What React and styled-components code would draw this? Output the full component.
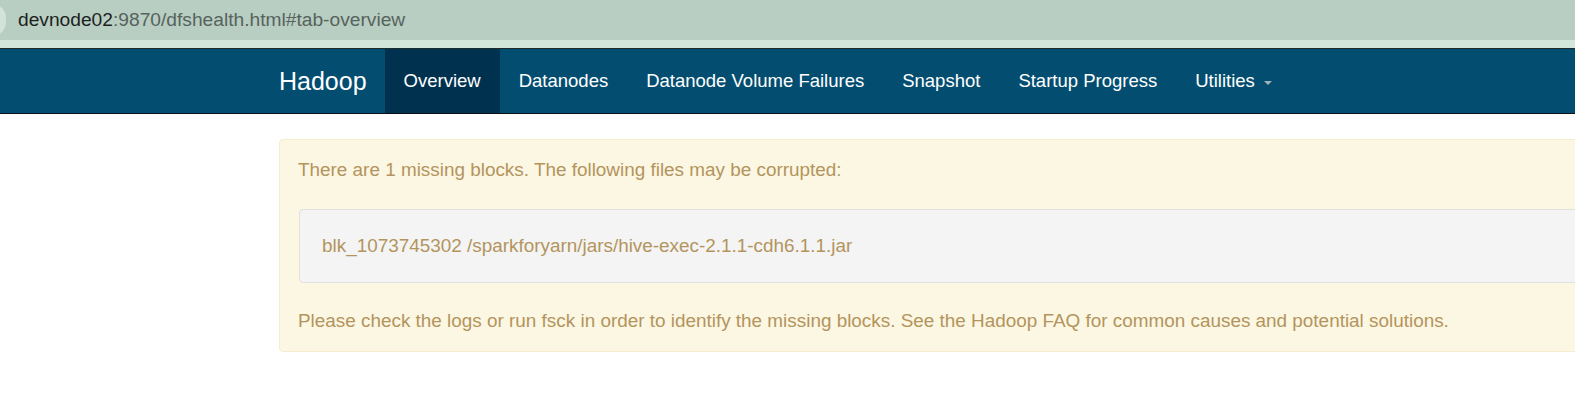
import React from "react";
import styled, { createGlobalStyle } from "styled-components";

const GlobalStyle = createGlobalStyle`
  html, body {
    margin: 0;
    padding: 0;
    background: #fff;
    overflow: hidden;
  }
  body {
    font-family: "Liberation Sans", Arial, sans-serif;
  }
`;

const navItems = [
  { label: "Overview", active: true },
  { label: "Datanodes" },
  { label: "Datanode Volume Failures" },
  { label: "Snapshot" },
  { label: "Startup Progress" },
  { label: "Utilities", dropdown: true },
];

const App = () => {
  return (
    <Page>
      <GlobalStyle />
      <AddressBar>
        <SiteChip />
        <Url>
          <Host>devnode02</Host>:9870/dfshealth.html#tab-overview
        </Url>
      </AddressBar>
      <Strip />
      <Navbar>
        <NavInner>
          <Brand>Hadoop</Brand>
          {navItems.map((item) => (
            <NavItem key={item.label} $active={item.active}>
              {item.label}
              {item.dropdown && <Caret />}
            </NavItem>
          ))}
        </NavInner>
      </Navbar>
      <Content>
        <Alert>
          <AlertText>There are 1 missing blocks. The following files may be corrupted:</AlertText>
          <Pre>blk_1073745302 /sparkforyarn/jars/hive-exec-2.1.1-cdh6.1.1.jar</Pre>
          <AlertText $last>
            Please check the logs or run fsck in order to identify the missing blocks. See the Hadoop FAQ for common causes and potential solutions.
          </AlertText>
        </Alert>
      </Content>
    </Page>
  );
};

export default App;

const Page = styled.div`
  width: 1575px;
  height: 406px;
  overflow: hidden;
`;

const AddressBar = styled.div`
  height: 40px;
  background: #b9cec3;
  display: flex;
  align-items: center;
  position: relative;
`;

const SiteChip = styled.div`
  position: absolute;
  left: -22px;
  top: 4px;
  width: 28px;
  height: 32px;
  border-radius: 16px;
  background: #d2e3d9;
`;

const Url = styled.div`
  margin-left: 18px;
  font-size: 19.2px;
  color: #56635d;
  white-space: nowrap;
`;

const Host = styled.span`
  color: #1d1f1e;
`;

const Strip = styled.div`
  height: 8px;
  background: #d3e6da;
  border-bottom: 1px solid #1d2b2a;
`;

const Navbar = styled.nav`
  height: 64px;
  background: #034e70;
  border-bottom: 1px solid #0a0f12;
`;

const NavInner = styled.div`
  height: 100%;
  display: flex;
  align-items: stretch;
  padding-left: 279px;
`;

const Brand = styled.div`
  display: flex;
  align-items: center;
  padding-right: 18px;
  font-size: 25px;
  color: #fff;
`;

const NavItem = styled.div`
  display: flex;
  align-items: center;
  padding: 0 19px;
  font-size: 18.5px;
  color: #fff;
  background: ${(p) => (p.$active ? "#003250" : "transparent")};
  white-space: nowrap;
`;

const Caret = styled.span`
  display: inline-block;
  margin-left: 9px;
  margin-top: 3px;
  width: 0;
  height: 0;
  border-left: 4px solid transparent;
  border-right: 4px solid transparent;
  border-top: 4px solid #9fb1bb;
`;

const Content = styled.main`
  padding: 25px 0 0 279px;
`;

const Alert = styled.div`
  width: 1400px;
  box-sizing: border-box;
  background: #fcf7e3;
  border: 1px solid #f7ecd0;
  border-radius: 4px;
  padding: 17px 18px 17px 18px;
  color: #b3945d;
`;

const AlertText = styled.p`
  margin: 0 0 ${(p) => (p.$last ? "0" : "26px")} 0;
  font-size: 18.9px;
  line-height: 26px;
`;

const Pre = styled.pre`
  margin: 0 0 25px 1px;
  padding: 23px 22px;
  background: #f4f4f4;
  border: 1px solid #e0e0e0;
  border-radius: 4px;
  font-family: "Liberation Sans", Arial, sans-serif;
  font-size: 18.9px;
  line-height: 26px;
  color: #b3945d;
`;
